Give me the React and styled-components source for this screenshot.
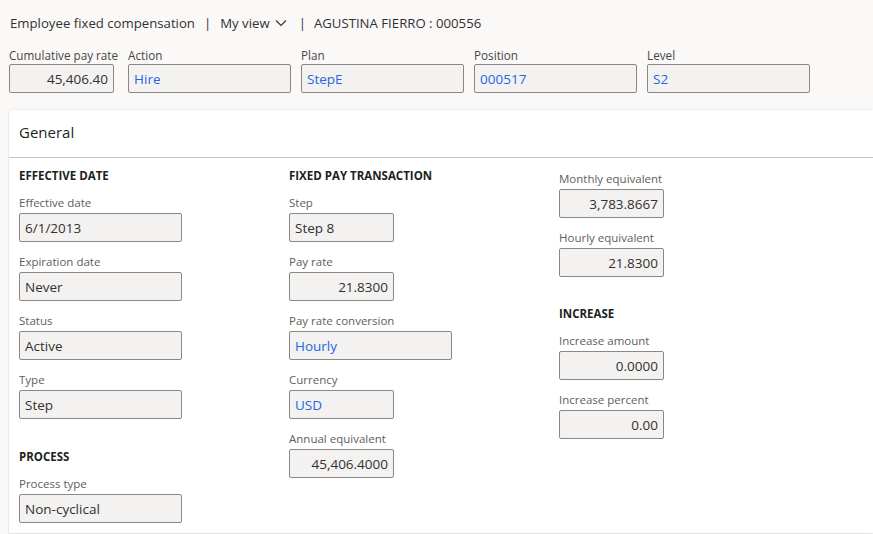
import React from 'react'
import styled, { createGlobalStyle } from 'styled-components'

const GlobalStyle = createGlobalStyle`
    body {
        margin : 0;
        background : #faf9f8;
        font-family : "Open Sans", "Noto Sans", sans-serif;
        color : #323130;
    }
`

const Page = styled.div`
    width : 873px;
    height : 534px;
    overflow : hidden;
`

const Header = styled.div`
    display : flex;
    align-items : center;
    height : 20px;
    padding : 13px 0 0 10px;
    font-size : 13.2px;
    color : #323130;
    white-space : nowrap;
`

const Sep = styled.span`
    margin : 0 ${p => p.wide ? '8px' : '9px'} 0 ${p => p.wide ? '12px' : '9px'};
    color : #323130;
`

const ViewSwitch = styled.span`
    display : inline-flex;
    align-items : center;
    gap : 5px;
`

const TopRow = styled.div`
    display : flex;
    gap : 10px;
    padding : 14px 0 0 9px;
`

const Group = styled.div`
    display : flex;
    flex-direction : column;
    margin-bottom : ${p => p.top ? '0' : '12px'};
`

const Label = styled.div`
    font-size : ${p => p.top ? '11.7px' : '11.5px'};
    line-height : 16px;
    height : 16px;
    margin-bottom : ${p => p.top ? '1px' : '2px'};
    color : ${p => p.top ? '#484644' : '#605e5c'};
    white-space : nowrap;
`

const Field = styled.div`
    box-sizing : border-box;
    width : ${p => p.wide ? '163px' : '105px'};
    height : 29px;
    border : 1px solid #8a8886;
    border-radius : 2px;
    background : #f3f2f1;
    display : flex;
    align-items : center;
    justify-content : ${p => p.num ? 'flex-end' : 'flex-start'};
    padding : 0 5px;
    font-size : 13.5px;
    color : ${p => p.link ? '#2266e3' : '#323130'};
    white-space : nowrap;
`

const Card = styled.div`
    margin : 17px 0 0 9px;
    background : #ffffff;
    box-shadow : 0 0 2px rgba(0, 0, 0, 0.12), 0 1px 2px rgba(0, 0, 0, 0.08);
    height : 423px;
`

const CardHeader = styled.div`
    box-sizing : border-box;
    height : 48px;
    display : flex;
    align-items : center;
    padding : 0 0 3px 10px;
    font-size : 15px;
    color : #201f1e;
    border-bottom : 1px solid #c8c6c4;
`

const CardBody = styled.div`
    display : grid;
    grid-template-columns : 270px 270px 270px;
    padding : 10px 0 0 10px;
`

const Column = styled.div`
    display : flex;
    flex-direction : column;
    padding-top : ${p => p.offset || 0}px;
`

const Heading = styled.div`
    font-size : 11.5px;
    font-weight : 700;
    line-height : 16px;
    color : #201f1e;
    margin-top : ${p => p.gap || 0}px;
    margin-bottom : 11px;
`

const Chevron = () => (
    <svg width="12" height="8" viewBox="0 0 12 8" fill="none">
        <path d="M1 1.5 L6 6.5 L11 1.5" stroke="#323130" strokeWidth="1.1" />
    </svg>
)

const Input = ({ label, value, wide, num, link, top }) => (
    <Group top={top}>
        <Label top={top}>{label}</Label>
        <Field wide={wide} num={num} link={link}>{value}</Field>
    </Group>
)

const App = () => {
    return <Page>
        <GlobalStyle />
        <Header>
            <span>Employee fixed compensation</span>
            <Sep>|</Sep>
            <ViewSwitch>My view <Chevron /></ViewSwitch>
            <Sep wide>|</Sep>
            <span>AGUSTINA FIERRO : 000556</span>
        </Header>
        <TopRow>
            <Input top label="Cumulative pay rate" value="45,406.40" num />
            <Input top label="Action" value="Hire" wide link />
            <Input top label="Plan" value="StepE" wide link />
            <Input top label="Position" value="000517" wide link />
            <Input top label="Level" value="S2" wide link />
        </TopRow>
        <Card>
            <CardHeader>General</CardHeader>
            <CardBody>
                <Column>
                    <Heading>EFFECTIVE DATE</Heading>
                    <Input label="Effective date" value="6/1/2013" wide />
                    <Input label="Expiration date" value="Never" wide />
                    <Input label="Status" value="Active" wide />
                    <Input label="Type" value="Step" wide />
                    <Heading gap={18}>PROCESS</Heading>
                    <Input label="Process type" value="Non-cyclical" wide />
                </Column>
                <Column>
                    <Heading>FIXED PAY TRANSACTION</Heading>
                    <Input label="Step" value="Step 8" />
                    <Input label="Pay rate" value="21.8300" num />
                    <Input label="Pay rate conversion" value="Hourly" wide link />
                    <Input label="Currency" value="USD" link />
                    <Input label="Annual equivalent" value="45,406.4000" num />
                </Column>
                <Column offset={3}>
                    <Input label="Monthly equivalent" value="3,783.8667" num />
                    <Input label="Hourly equivalent" value="21.8300" num />
                    <Heading gap={17}>INCREASE</Heading>
                    <Input label="Increase amount" value="0.0000" num />
                    <Input label="Increase percent" value="0.00" num />
                </Column>
            </CardBody>
        </Card>
    </Page>
}

export default App
